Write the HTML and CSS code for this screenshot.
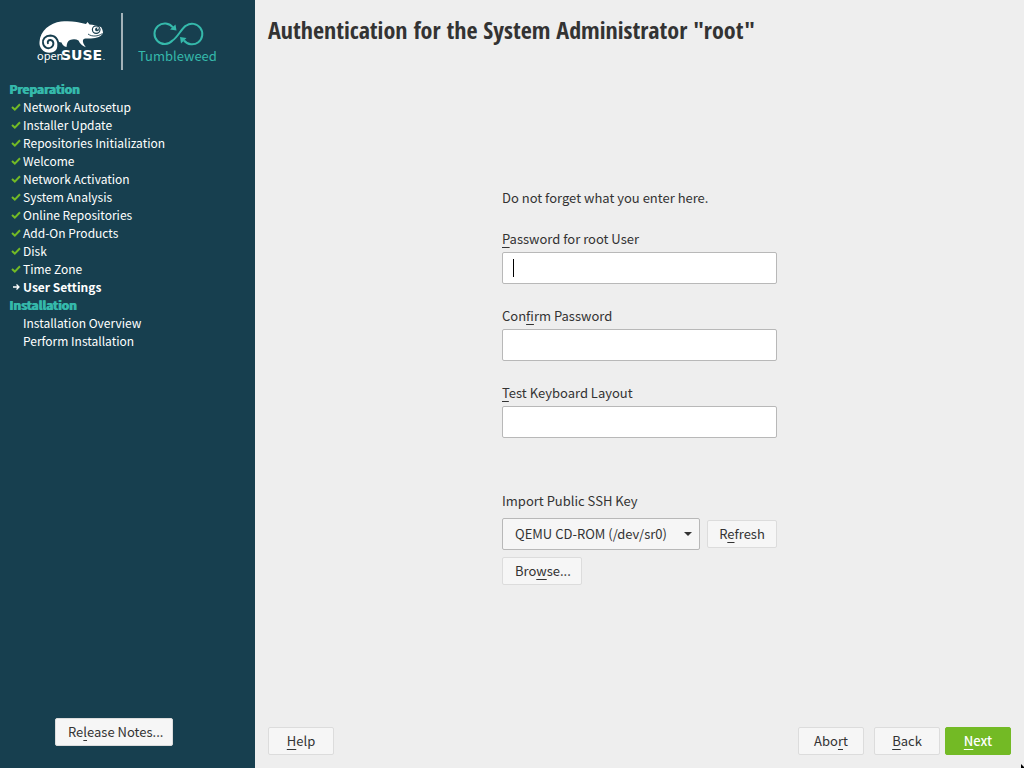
FILE: index.html
```html
<!DOCTYPE html>
<html lang="en">
<head>
<meta charset="utf-8">
<title>Authentication for the System Administrator "root"</title>
<link rel="stylesheet" href="styles.css">
</head>
<body>
<svg class="symbols" aria-hidden="true">
  <symbol id="check" viewBox="0 0 10 8"><path d="M1 4 L3.8 6.6 L9 1.2" fill="none" stroke="#73ba25" stroke-width="2"/></symbol>
</svg>
<div class="installer">
  <aside class="sidebar">
    <header class="brand">
      <svg class="brand-chameleon" viewBox="0 0 68 44" role="img" aria-label="openSUSE">
        <path fill="#fff" d="M2.500 22 C3 11 13 3 24 1.600 C33 0.300 41 2 49 4 L50.500 2 L52.500 4.400 C56 4.500 60 5.700 64 7 C65 8.500 66 11 66 13 C64.500 16.500 60 18 54 18.500 C49 18.500 47 18 46 20 C45.500 22 46.500 24 48.800 27.200 C45 26 43 23.500 41.500 20.500 C39 19 36 19 33 20 C30.500 21 30 23 29.500 27 C27 26.500 25.500 25 24.500 22.500 L22 22 A9.800 9.800 0 1 1 2.500 22Z"/>
        <path fill="none" stroke="#173f4f" stroke-width="1.900" stroke-linecap="round" d="M20.500 29.500 C23 22 19.500 15.800 13.500 15.500 C8 15.500 5.500 19.500 6 23 C6.500 27.500 11 29.200 14 27.500 C17.500 25.500 17 20.500 13.500 20 C11.500 19.800 10.300 21.500 10.900 23.200"/>
        <circle cx="59.200" cy="9.600" r="3.800" fill="#fff" stroke="#173f4f" stroke-width="1.200"/>
        <circle cx="60" cy="9.400" r="1.900" fill="#173f4f"/>
        <circle cx="60.700" cy="8.800" r=".7" fill="#fff"/>
        <path d="M51 14 C55 17 61 16.500 65.500 13.500" fill="none" stroke="#173f4f" stroke-width=".9"/>
        <text class="logo-open" x="0" y="40">open</text>
        <text class="logo-suse" x="24" y="40">SUSE</text>
        <circle cx="67" cy="39.500" r=".6" fill="#fff"/>
      </svg>
      <span class="brand-rule"></span>
      <div class="product">
        <svg class="product-icon" viewBox="0 0 52 26" aria-hidden="true">
          <path d="M22 6.500 A10.300 10.300 0 1 0 21.500 19.500 C27 16 30 8 35 4.700 A10.300 10.300 0 1 1 33 19.500" fill="none" stroke="#35b9ab" stroke-width="2"/>
          <path d="M24.500 3.500 L25.500 9.500 L19 8.500Z M29 16 L35.500 17 L30 22.500Z" fill="#35b9ab"/>
        </svg>
        <span class="product-name">Tumbleweed</span>
      </div>
    </header>
    <nav class="steps" aria-label="Installation steps">
      <h2 class="steps-title">Preparation</h2>
      <ul class="step-list">
        <li class="step"><svg class="step-icon"><use href="#check"/></svg>Network Autosetup</li>
        <li class="step"><svg class="step-icon"><use href="#check"/></svg>Installer Update</li>
        <li class="step"><svg class="step-icon"><use href="#check"/></svg>Repositories Initialization</li>
        <li class="step"><svg class="step-icon"><use href="#check"/></svg>Welcome</li>
        <li class="step"><svg class="step-icon"><use href="#check"/></svg>Network Activation</li>
        <li class="step"><svg class="step-icon"><use href="#check"/></svg>System Analysis</li>
        <li class="step"><svg class="step-icon"><use href="#check"/></svg>Online Repositories</li>
        <li class="step"><svg class="step-icon"><use href="#check"/></svg>Add-On Products</li>
        <li class="step"><svg class="step-icon"><use href="#check"/></svg>Disk</li>
        <li class="step"><svg class="step-icon"><use href="#check"/></svg>Time Zone</li>
        <li class="step step-current" aria-current="step"><svg class="step-icon" viewBox="0 0 10 8"><path d="M2 4 H8 M5.500 1.500 L8 4 L5.500 6.500" fill="none" stroke="#fff" stroke-width="1.300"/></svg>User Settings</li>
      </ul>
      <h2 class="steps-title">Installation</h2>
      <ul class="step-list">
        <li class="step"><span class="step-icon"></span>Installation Overview</li>
        <li class="step"><span class="step-icon"></span>Perform Installation</li>
      </ul>
    </nav>
    <button class="button button-notes" type="button"><span>Re<u>l</u>ease Notes...</span></button>
  </aside>
  <main class="content">
    <h1 class="title">Authentication for the System Administrator "root"</h1>
    <form class="form" id="auth">
      <p class="hint">Do not forget what you enter here.</p>
      <div class="field">
        <label for="password"><u>P</u>assword for root User</label>
        <div class="input-wrap input-active"><input class="input" id="password" type="password"></div>
      </div>
      <div class="field">
        <label for="confirm">Con<u>f</u>irm Password</label>
        <div class="input-wrap"><input class="input" id="confirm" type="password"></div>
      </div>
      <div class="field">
        <label for="layout"><u>T</u>est Keyboard Layout</label>
        <div class="input-wrap"><input class="input" id="layout" type="text"></div>
      </div>
      <div class="ssh">
        <label for="device">Import Public SSH Key</label>
        <div class="ssh-row">
          <div class="select-wrap">
            <select class="select" id="device"><option>QEMU CD-ROM (/dev/sr0)</option></select>
          </div>
          <button class="button button-refresh" type="button"><span>R<u>e</u>fresh</span></button>
        </div>
        <button class="button button-browse" type="button"><span>Bro<u>w</u>se...</span></button>
      </div>
    </form>
    <footer class="actions">
      <button class="button button-action" type="button"><span><u>H</u>elp</span></button>
      <div class="actions-right">
        <button class="button button-action" type="button"><span>Abo<u>r</u>t</span></button>
        <button class="button button-action button-back" type="button"><span><u>B</u>ack</span></button>
        <button class="button button-action button-next" type="submit" form="auth"><span><u>N</u>ext</span></button>
      </div>
    </footer>
  </main>
</div>
<svg class="pointer" viewBox="0 0 3 4" aria-hidden="true"><path d="M0 0 L3 3 V4 H0Z"/></svg>
</body>
</html>
```

FILE: styles.css
```css
* { box-sizing: border-box; }
body {
  margin: 0;
  background: #eee;
  color: #333;
  font: 13px/18px "Source Sans Pro", "Noto Sans CJK SC", "Noto Sans", sans-serif;
}
.symbols { display: none; }
.installer { display: flex; min-height: 100vh; }
.sidebar {
  flex: none;
  width: 255px;
  display: flex;
  flex-direction: column;
  background: #173f4f;
  color: #fff;
}
.brand { display: flex; padding: 13px 0 10px 37px; height: 80px; }
.brand-chameleon { width: 68px; height: 44px; margin-top: 7px; overflow: visible; }
.logo-open { font: 11px "Noto Sans CJK SC", sans-serif; fill: #fff; }
.logo-suse { font: bold 14px "DejaVu Sans", sans-serif; fill: #fff; }
.brand-rule { width: 2px; margin: 0 15px 0 16px; background: #a3b2b9; }
.product { display: flex; flex-direction: column; align-items: center; color: #35b9ab; }
.product-icon { width: 52px; height: 26px; margin-top: 8px; overflow: visible; }
.product-name { font-size: 13px; line-height: 18px; }
.steps { padding-left: 9px; font-size: 12px; }
.steps-title {
  margin: 0;
  color: #35b9ab;
  font-size: 12px;
  font-weight: bold;
  line-height: 18px;
  text-shadow: 1px 0 #35b9ab;
}
.step-list { margin: 0; padding: 0; list-style: none; }
.step { display: flex; align-items: center; gap: 2px; padding-left: 2px; }
.step-icon { width: 10px; height: 8px; }
.step-current { font-weight: bold; }
u { text-decoration: underline 1px; text-underline-offset: 3px; text-decoration-skip-ink: none; }
.button {
  height: 28px;
  padding: 0 12px;
  border: 1px solid #dcdcdc;
  border-radius: 2px;
  background: #f6f6f6;
  color: #333;
  font: inherit;
  white-space: nowrap;
}
.button-notes { width: 118px; margin: auto 0 22px 55px; }
.content {
  flex: 1;
  display: flex;
  flex-direction: column;
  padding: 13px;
}
.title {
  margin: 0;
  font: bold 24px/34px "Open Sans Condensed", "Noto Sans Condensed", "Liberation Sans Narrow", "Roboto Condensed", sans-serif;
}
.form { width: 275px; margin: auto; }
.hint { margin: 0 0 23px; }
.field { margin-bottom: 23px; }
.field label, .ssh label { display: block; margin-bottom: 4px; }
.input-wrap { position: relative; }
.input {
  display: block;
  width: 100%;
  height: 32px;
  padding: 0 10px;
  border: 1px solid #b8b8b8;
  border-radius: 2px;
  background: #fff;
  color: #333;
  font: inherit;
}
.input-active::after {
  content: "";
  position: absolute;
  left: 11px;
  top: 7px;
  width: 1px;
  height: 18px;
  background: #000;
}
.ssh { padding-top: 31px; }
.ssh .ssh-row { display: flex; align-items: center; gap: 7px; margin: 8px 0 7px; }
.select-wrap { flex: 1; position: relative; }
.select-wrap::after {
  content: "";
  position: absolute;
  right: 8px;
  top: 14px;
  border: 4px solid transparent;
  border-top-color: #333;
  border-bottom: 0;
  pointer-events: none;
}
.select {
  display: block;
  width: 100%;
  height: 32px;
  padding: 0 24px 0 12px;
  appearance: none;
  border: 1px solid #b8b8b8;
  border-radius: 2px;
  background: #f6f6f6;
  color: #333;
  font: inherit;
}
.button-refresh { width: 70px; padding: 0; }
.button-browse { width: 80px; }
.actions, .actions-right { display: flex; }
.actions { justify-content: space-between; }
.button-action { width: 66px; }
.button-back { margin: 0 5px 0 10px; }
.button-next { border-color: #73ba25; background: #73ba25; color: #fff; font-weight: 500; }
.pointer { position: fixed; right: 0; bottom: 0; width: 3px; height: 4px; }
```
